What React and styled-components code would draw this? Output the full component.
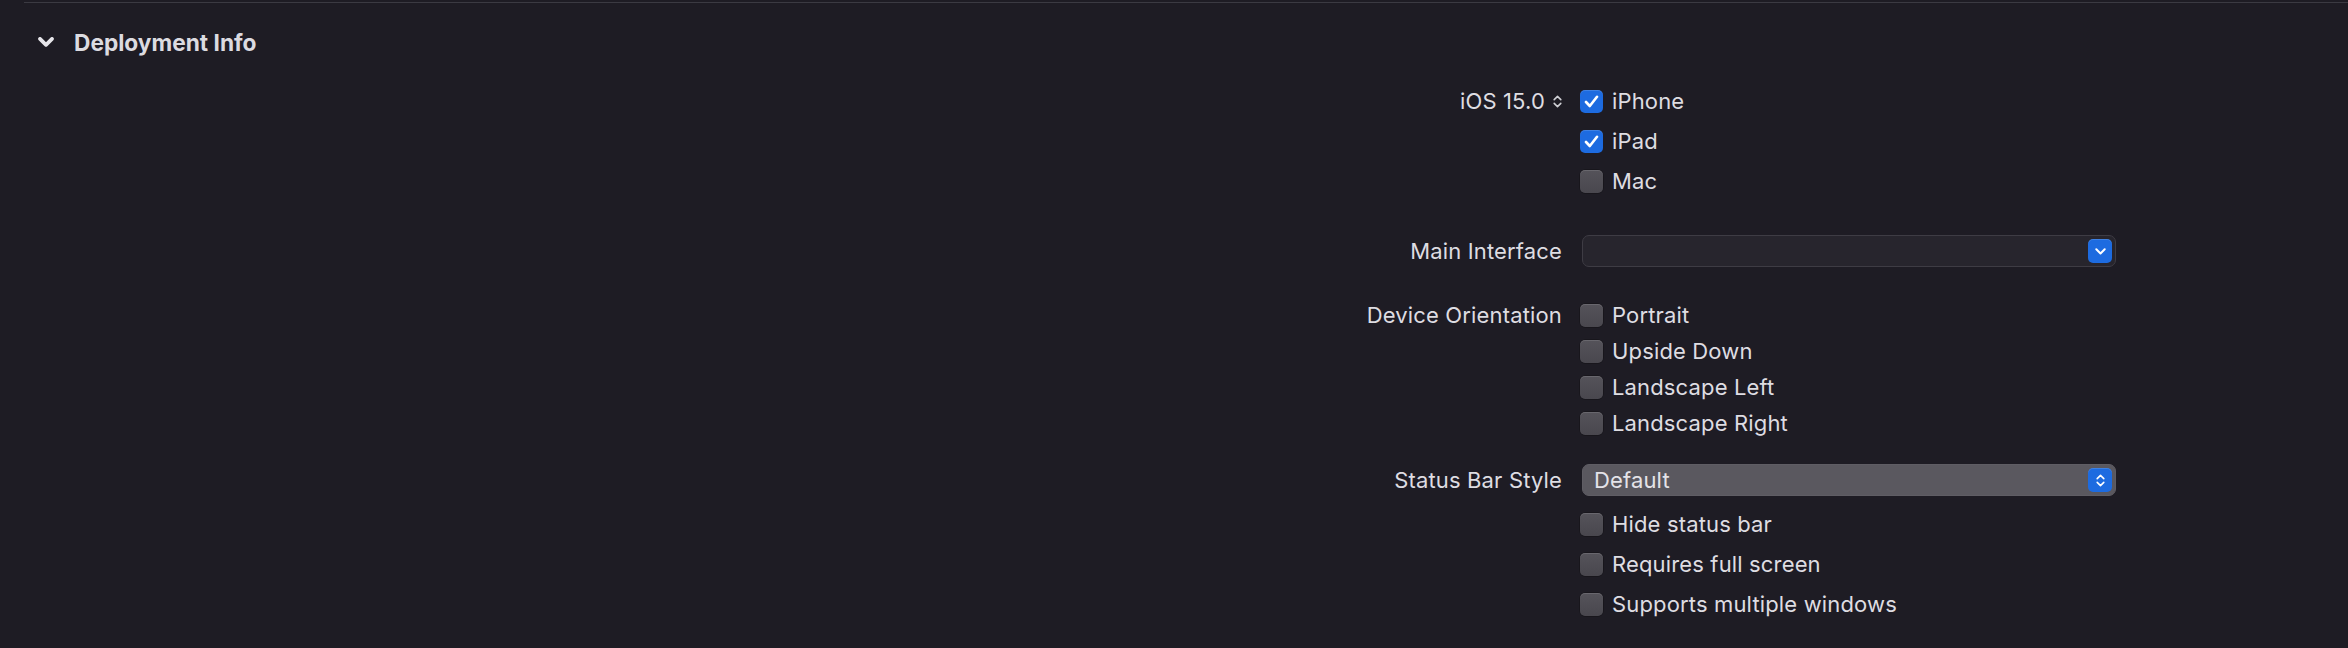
import React from "react";
import styled, { createGlobalStyle } from "styled-components";

const GlobalStyle = createGlobalStyle`
  html, body {
    margin: 0;
    padding: 0;
    background: #1e1c24;
  }
  body {
    font-family: Inter, "Noto Sans", "Liberation Sans", sans-serif;
    color: #dedde2;
    -webkit-font-smoothing: antialiased;
  }
`;

const Page = styled.main`
  padding-top: 2px;
  min-height: 648px;
  box-sizing: border-box;
  background: #1e1c24;
`;

const Divider = styled.div`
  margin-left: 24px;
  height: 1px;
  background: #3b3a42;
`;

const Header = styled.div`
  height: 78px;
  display: flex;
  align-items: center;
  padding-left: 38px;
  gap: 20px;
`;

const SectionTitle = styled.h2`
  margin: 0;
  font-size: 22.7px;
  font-weight: 700;
  color: #dcdbe0;
`;

const Form = styled.div`
  display: flex;
  flex-direction: column;
`;

const Row = styled.div`
  display: flex;
  align-items: flex-start;
  gap: 18px;
  margin-top: ${(p) => p.$top || 0}px;
`;

const Label = styled.div`
  width: 1562px;
  flex: none;
  display: flex;
  justify-content: flex-end;
  align-items: center;
  gap: 8px;
  height: ${(p) => p.$h}px;
  font-size: 22px;
  letter-spacing: 0.15px;
  color: #dedde2;
  white-space: nowrap;
`;

const Controls = styled.div`
  width: 536px;
  display: flex;
  flex-direction: column;
`;

const CheckItem = styled.label`
  display: flex;
  align-items: center;
  gap: 9px;
  height: ${(p) => p.$h}px;
  font-size: 22px;
  letter-spacing: 0.15px;
  color: #dedde2;
  white-space: nowrap;
`;

const Box = styled.span`
  width: 23px;
  height: 23px;
  box-sizing: border-box;
  border-radius: 5px;
  display: flex;
  align-items: center;
  justify-content: center;
  flex: none;
  background: ${(p) =>
    p.$checked
      ? "#1d6be0"
      : "linear-gradient(#55535a, #49474e)"};
  box-shadow: ${(p) =>
    p.$checked
      ? "inset 0 1px 0 rgba(255,255,255,0.15)"
      : "inset 0 1px 0 rgba(255,255,255,0.12), 0 0 0 0.5px rgba(0,0,0,0.4)"};
`;

const Select = styled.div`
  height: 32px;
  margin-left: 2px;
  box-sizing: border-box;
  border-radius: 7px;
  display: flex;
  align-items: center;
  justify-content: space-between;
  padding: 0 3px 0 11px;
  font-size: 22px;
  letter-spacing: 0.15px;
  color: #e4e3e8;
  background: ${(p) => (p.$filled ? "#5a585f" : "#27252d")};
  border: 1px solid ${(p) => (p.$filled ? "#5f5d64" : "#3e3c44")};
`;

const SelectButton = styled.span`
  width: 24px;
  height: 24px;
  border-radius: 5px;
  background: #1d6be0;
  display: flex;
  align-items: center;
  justify-content: center;
  box-shadow: inset 0 1px 0 rgba(255,255,255,0.15);
`;

const Check = () => (
  <svg width="15" height="13" viewBox="0 0 15 13">
    <path
      d="M2 7 L5.8 11 L13 1.8"
      fill="none"
      stroke="#fff"
      strokeWidth="2.6"
      strokeLinecap="round"
      strokeLinejoin="round"
    />
  </svg>
);

const UpDown = ({ color = "#cfcfd4", w = 9, h = 13 }) => (
  <svg width={w} height={h} viewBox="0 0 9 13">
    <path
      d="M1.2 4.6 L4.5 1.4 L7.8 4.6 M1.2 8.4 L4.5 11.6 L7.8 8.4"
      fill="none"
      stroke={color}
      strokeWidth="1.6"
      strokeLinecap="round"
      strokeLinejoin="round"
    />
  </svg>
);

const ChevronDown = ({ color = "#fff", w = 11, h = 7, sw = 2 }) => (
  <svg width={w} height={h} viewBox="0 0 11 7">
    <path
      d="M1.3 1.3 L5.5 5.5 L9.7 1.3"
      fill="none"
      stroke={color}
      strokeWidth={sw}
      strokeLinecap="round"
      strokeLinejoin="round"
    />
  </svg>
);

function CheckList({ items, pitch }) {
  return (
    <Controls>
      {items.map((it) => (
        <CheckItem key={it.label} $h={pitch}>
          <Box $checked={it.checked}>{it.checked && <Check />}</Box>
          {it.label}
        </CheckItem>
      ))}
    </Controls>
  );
}

export default function App() {
  return (
    <Page>
      <GlobalStyle />
      <Divider />
      <Header>
        <ChevronDown color="#e6e5ea" w={16} h={10} sw={2.6} />
        <SectionTitle>Deployment Info</SectionTitle>
      </Header>
      <Form>
        <Row>
          <Label $h={40}>
            iOS 15.0 <UpDown />
          </Label>
          <CheckList
            pitch={40}
            items={[
              { label: "iPhone", checked: true },
              { label: "iPad", checked: true },
              { label: "Mac" },
            ]}
          />
        </Row>

        <Row $top={34}>
          <Label $h={32}>Main Interface</Label>
          <Controls>
            <Select>
              <span />
              <SelectButton>
                <ChevronDown />
              </SelectButton>
            </Select>
          </Controls>
        </Row>

        <Row $top={30}>
          <Label $h={36}>Device Orientation</Label>
          <CheckList
            pitch={36}
            items={[
              { label: "Portrait" },
              { label: "Upside Down" },
              { label: "Landscape Left" },
              { label: "Landscape Right" },
            ]}
          />
        </Row>

        <Row $top={23}>
          <Label $h={32}>Status Bar Style</Label>
          <Controls>
            <Select $filled>
              <span>Default</span>
              <SelectButton>
                <UpDown color="#fff" />
              </SelectButton>
            </Select>
          </Controls>
        </Row>

        <Row $top={8}>
          <Label $h={40} />
          <CheckList
            pitch={40}
            items={[
              { label: "Hide status bar" },
              { label: "Requires full screen" },
              { label: "Supports multiple windows" },
            ]}
          />
        </Row>
      </Form>
    </Page>
  );
}
